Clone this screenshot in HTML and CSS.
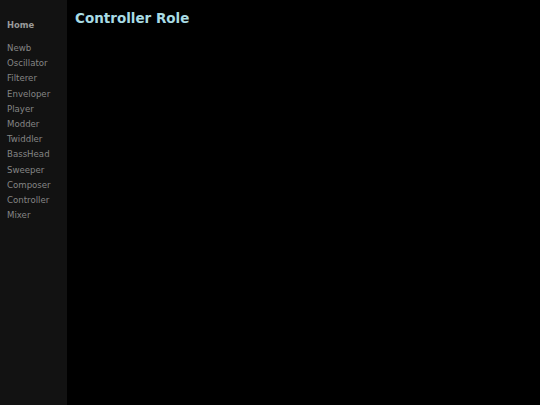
FILE: index.html
```html
<!DOCTYPE html>
<html>
<head>
<meta charset="utf-8">
<link rel="stylesheet" href="styles.css">
</head>
<body>
<div class="layout">
  <nav class="sidebar">
    <div class="home">Home</div>
    <ul class="menu">
      <li>Newb</li>
      <li>Oscillator</li>
      <li>Filterer</li>
      <li>Enveloper</li>
      <li>Player</li>
      <li>Modder</li>
      <li>Twiddler</li>
      <li>BassHead</li>
      <li>Sweeper</li>
      <li>Composer</li>
      <li>Controller</li>
      <li>Mixer</li>
    </ul>
  </nav>
  <main class="content">
    <h1 class="title">Controller Role</h1>
  </main>
</div>
</body>
</html>
```
FILE: styles.css
```css
html, body {
  margin: 0;
  padding: 0;
  height: 100%;
  background: #000;
  font-family: "DejaVu Sans", Verdana, sans-serif;
}
.layout {
  display: flex;
  height: 100%;
}
.sidebar {
  width: 60px;
  padding: 19px 0 0 7px;
  background: #121212;
  flex-shrink: 0;
}
.home {
  font-weight: bold;
  font-size: 8.4px;
  color: #9a9a9a;
  line-height: 12px;
}
.menu {
  list-style: none;
  margin: 10px 0 0 0;
  padding: 0;
}
.menu li {
  font-size: 8.6px;
  color: #858585;
  line-height: 15.2px;
}
.content {
  flex: 1;
  padding: 9px 0 0 8px;
}
.title {
  margin: 0;
  font-size: 13.5px;
  font-weight: bold;
  color: #a8dbe4;
  line-height: 18px;
}
```
